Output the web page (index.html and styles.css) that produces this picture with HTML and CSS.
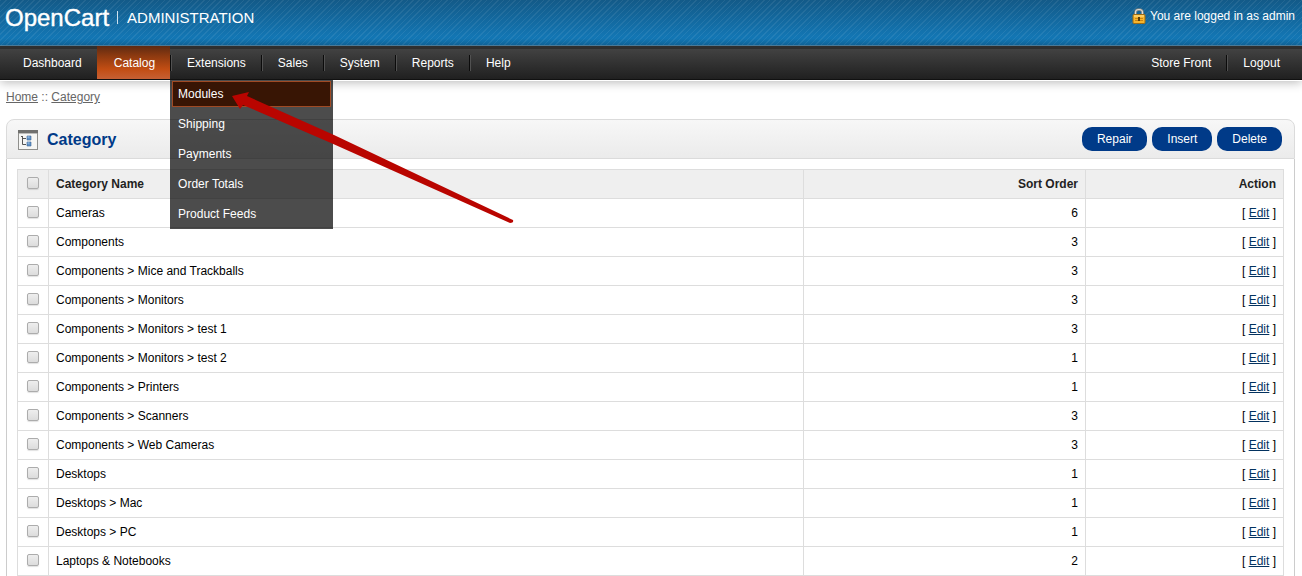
FILE: index.html
```html
<!DOCTYPE html>
<html lang="en">
<head>
<meta charset="utf-8">
<title>Category</title>
<link rel="stylesheet" href="styles.css">
</head>
<body>
<header class="header">
  <div class="brand"><span class="brand-name">OpenCart</span><span class="brand-section">ADMINISTRATION</span></div>
  <div class="login">
    <svg class="lock" viewBox="0 0 14 16" aria-hidden="true">
      <path d="M3.500 8V4.500Q3.500 1.500 7 1.500T10.500 4.500V8" fill="none" stroke="#85857f" stroke-width="2.600"/>
      <path d="M3.500 8V4.500Q3.500 1.500 7 1.500T10.500 4.500V8" fill="none" stroke="#deded8" stroke-width="1.200"/>
      <rect x="1" y="6.500" width="12" height="9" rx="1" fill="#f7b52c" stroke="#9c6c14"/>
      <path d="M2 8H12" stroke="#ffe49a"/>
      <path d="M3 10.500H11M3 12.500H11" stroke="#c98412"/>
      <rect x="6" y="9" width="2" height="4" fill="#5a3c08"/>
    </svg>
    <span>You are logged in as admin</span>
  </div>
</header>
<nav class="nav">
  <ul class="nav-list">
    <li class="nav-item"><a href="#">Dashboard</a></li>
    <li class="nav-item active"><a href="#">Catalog</a></li>
    <li class="nav-item divided"><a href="#">Extensions</a>
      <ul class="menu">
        <li><a class="menu-link current" href="#">Modules</a></li>
        <li><a class="menu-link" href="#">Shipping</a></li>
        <li><a class="menu-link" href="#">Payments</a></li>
        <li><a class="menu-link" href="#">Order Totals</a></li>
        <li><a class="menu-link" href="#">Product Feeds</a></li>
      </ul>
    </li>
    <li class="nav-item divided"><a href="#">Sales</a></li>
    <li class="nav-item divided"><a href="#">System</a></li>
    <li class="nav-item divided"><a href="#">Reports</a></li>
    <li class="nav-item divided"><a href="#">Help</a></li>
  </ul>
  <ul class="nav-list">
    <li class="nav-item"><a href="#">Store Front</a></li>
    <li class="nav-item divided"><a href="#">Logout</a></li>
  </ul>
</nav>
<main class="content">
  <div class="breadcrumb"><a href="#">Home</a> :: <a href="#">Category</a></div>
  <section class="box">
    <div class="heading">
      <svg class="heading-icon" viewBox="0 0 22 22" aria-hidden="true">
        <rect x="1.500" y="2" width="19" height="18.500" fill="#f6f6f4" stroke="#8f8f8c"/>
        <path d="M1 2.500H21" stroke="#70706e" stroke-width="3"/>
        <path d="M2 4.500H20" stroke="#bcbcba"/>
        <path d="M4 7.500H6M5.500 7V15.500H9M5.500 9.500H9" fill="none" stroke="#555"/>
        <path d="M10 7h4v4h-4zM10 13h4v4h-4z" fill="#5f92c8" stroke="#3c6496" stroke-width=".6"/>
        <path d="M10.500 8h2M10.500 14h2" stroke="#a9c8e8"/>
      </svg>
      <h1>Category</h1>
      <div class="buttons"><button type="button">Repair</button><button type="button">Insert</button><button type="button">Delete</button></div>
    </div>
    <div class="box-body">
      <table class="list">
        <colgroup><col class="col-check"><col><col class="col-sort"><col class="col-action"></colgroup>
        <thead><tr><th><input type="checkbox" aria-label="Select all"></th><th class="left">Category Name</th><th class="right">Sort Order</th><th class="right">Action</th></tr></thead>
        <tbody>
          <tr><td><input type="checkbox" aria-label="Cameras"></td><td class="left">Cameras</td><td class="right">6</td><td class="right">[ <a href="#">Edit</a> ]</td></tr>
          <tr><td><input type="checkbox" aria-label="Components"></td><td class="left">Components</td><td class="right">3</td><td class="right">[ <a href="#">Edit</a> ]</td></tr>
          <tr><td><input type="checkbox" aria-label="Mice and Trackballs"></td><td class="left">Components &gt; Mice and Trackballs</td><td class="right">3</td><td class="right">[ <a href="#">Edit</a> ]</td></tr>
          <tr><td><input type="checkbox" aria-label="Monitors"></td><td class="left">Components &gt; Monitors</td><td class="right">3</td><td class="right">[ <a href="#">Edit</a> ]</td></tr>
          <tr><td><input type="checkbox" aria-label="test 1"></td><td class="left">Components &gt; Monitors &gt; test 1</td><td class="right">3</td><td class="right">[ <a href="#">Edit</a> ]</td></tr>
          <tr><td><input type="checkbox" aria-label="test 2"></td><td class="left">Components &gt; Monitors &gt; test 2</td><td class="right">1</td><td class="right">[ <a href="#">Edit</a> ]</td></tr>
          <tr><td><input type="checkbox" aria-label="Printers"></td><td class="left">Components &gt; Printers</td><td class="right">1</td><td class="right">[ <a href="#">Edit</a> ]</td></tr>
          <tr><td><input type="checkbox" aria-label="Scanners"></td><td class="left">Components &gt; Scanners</td><td class="right">3</td><td class="right">[ <a href="#">Edit</a> ]</td></tr>
          <tr><td><input type="checkbox" aria-label="Web Cameras"></td><td class="left">Components &gt; Web Cameras</td><td class="right">3</td><td class="right">[ <a href="#">Edit</a> ]</td></tr>
          <tr><td><input type="checkbox" aria-label="Desktops"></td><td class="left">Desktops</td><td class="right">1</td><td class="right">[ <a href="#">Edit</a> ]</td></tr>
          <tr><td><input type="checkbox" aria-label="Mac"></td><td class="left">Desktops &gt; Mac</td><td class="right">1</td><td class="right">[ <a href="#">Edit</a> ]</td></tr>
          <tr><td><input type="checkbox" aria-label="PC"></td><td class="left">Desktops &gt; PC</td><td class="right">1</td><td class="right">[ <a href="#">Edit</a> ]</td></tr>
          <tr><td><input type="checkbox" aria-label="Laptops &amp; Notebooks"></td><td class="left">Laptops &amp; Notebooks</td><td class="right">2</td><td class="right">[ <a href="#">Edit</a> ]</td></tr>
        </tbody>
      </table>
    </div>
  </section>
</main>
<svg class="pointer" viewBox="0 0 284 134" aria-hidden="true">
  <path d="M1 6L18 2L16 6L103 45L282 130Q283 133 279 133L100 53L12 15L9 19Z" fill="#b90500"/>
</svg>
</body>
</html>
```
FILE: styles.css
```css
* { box-sizing: border-box; }
body {
  position: relative;
  margin: 0;
  background: #fff;
  color: #000;
  font: 12px/16px "Liberation Sans", Arial, sans-serif;
}
ul { margin: 0; padding: 0; list-style: none; }

.header {
  display: flex;
  justify-content: space-between;
  align-items: flex-start;
  height: 46px;
  padding: 0 7px 0 5px;
  border-bottom: 1px solid #5287a8;
  background:
    repeating-linear-gradient(135deg, rgba(255,255,255,.07) 0 1px, transparent 1px 4px),
    linear-gradient(#135a88, #1377b5 85%, #116ca5);
  color: #fff;
}
.brand { display: flex; align-items: flex-start; padding-top: 4px; }
.brand-name { font-size: 24px; line-height: 28px; -webkit-text-stroke: 0.4px #fff; }
.brand-section {
  margin: 7px 0 0 8px;
  padding-left: 9px;
  border-left: 1px solid #cfe2ee;
  font-size: 15px;
  line-height: 13px;
}
.login { display: flex; align-items: center; gap: 4px; padding-top: 8px; }
.lock { width: 14px; height: 16px; }

.nav {
  display: flex;
  justify-content: space-between;
  height: 34px;
  padding: 0 7px 0 6px;
  border-bottom: 1px solid #111;
  background: linear-gradient(#2f2f2f 0 3px, #424242 3px, #202020);
  box-shadow: 0 1px 0 #fff, 0 2px 10px rgba(0,0,0,.3);
}
.nav-list { display: flex; }
.nav-item { position: relative; padding: 0 15px 0 17px; }
.nav-item > a { display: block; color: #fff; line-height: 34px; text-decoration: none; }
.active { background: linear-gradient(#5e2a12, #8d3a10 30%, #c24d13 70%, #c66034); }
.divided {
  background: linear-gradient(90deg, #0b0b0b 50%, #515151 50%) 0 9px / 2px 16px no-repeat;
}
.menu {
  position: absolute;
  z-index: 2;
  top: 34px;
  left: 0;
  display: grid;
  gap: 4px;
  width: 163px;
  padding: 1px 2px 2px;
  background: rgba(0,0,0,.7);
}
.menu-link {
  display: block;
  padding: 4px 5px;
  border: 1px solid transparent;
  color: #fff;
  text-decoration: none;
}
.current { border-color: #a04a24; background: #381504; }

.content { padding: 9px 7px 0 6px; }
.breadcrumb { color: #666; }
.breadcrumb a { color: #666; }
.box { margin-top: 14px; }
.heading {
  display: flex;
  align-items: center;
  height: 40px;
  padding: 0 12px 0 10px;
  border: 1px solid #dbdbdb;
  border-radius: 8px 8px 0 0;
  background: linear-gradient(#f7f7f7, #ebebeb);
}
.heading-icon { width: 22px; height: 22px; margin: 2px 8px 0 0; }
.heading h1 { margin: 0; padding-top: 2px; color: #003a88; font-size: 16px; line-height: 20px; }
.buttons { display: flex; gap: 5px; margin-left: auto; }
.buttons button {
  height: 24px;
  padding: 0 15px;
  border: 0;
  border-radius: 10px;
  background: #003a88;
  color: #fff;
  font: inherit;
}
.box-body { padding: 10px 10px 0; border: solid #ccc; border-width: 0 1px; }
.list { width: 100%; border-collapse: collapse; table-layout: fixed; }
.col-check { width: 31px; }
.col-sort { width: 282px; }
.col-action { width: 198px; }
.list th, .list td {
  height: 29px;
  padding: 0 7px;
  border: 1px solid #ddd;
  text-align: center;
}
.list th { background: #efefef; color: #222; }
.list .left { text-align: left; }
.list .right { text-align: right; }
.list td a { color: #03325f; }
.list input {
  display: block;
  width: 12px;
  height: 12px;
  margin: 0 auto 2px;
  appearance: none;
  border: 1px solid #acacac;
  border-radius: 2px;
  background: linear-gradient(#eee, #dcdcdc);
  box-shadow: 0 1px 1px rgba(0,0,0,.12);
}
.pointer {
  position: absolute;
  z-index: 3;
  top: 90px;
  left: 231px;
  width: 284px;
  height: 134px;
}
```
